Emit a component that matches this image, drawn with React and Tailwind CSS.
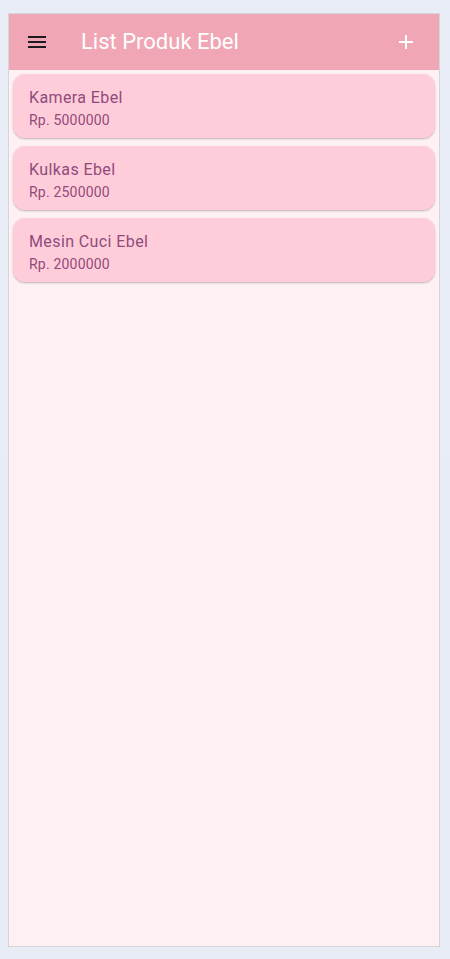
const products = [
  { name: "Kamera Ebel", price: 5000000 },
  { name: "Kulkas Ebel", price: 2500000 },
  { name: "Mesin Cuci Ebel", price: 2000000 },
];

function MenuIcon() {
  return (
    <svg width="24" height="24" viewBox="0 0 24 24" fill="currentColor">
      <path d="M3 18h18v-2H3v2zm0-5h18v-2H3v2zm0-7v2h18V6H3z" />
    </svg>
  );
}

function AddIcon() {
  return (
    <svg width="24" height="24" viewBox="0 0 24 24" fill="currentColor">
      <path d="M19 13h-6v6h-2v-6H5v-2h6V5h2v6h6v2z" />
    </svg>
  );
}

export default function App() {
  return (
    <div className="flex h-[959px] w-[450px] flex-col bg-gradient-to-b from-[#e9edf5] to-[#e7ecf5] pl-2 pr-[10px] pt-[13px] pb-[12px] font-['Roboto',sans-serif]">
      <div className="flex min-h-0 flex-1 flex-col border border-[#d2d5da] bg-[#fff0f4]">
        <header className="flex h-[56px] items-center bg-[#f0a6b4] pr-[9px]">
          <button className="flex h-[56px] w-[56px] items-center justify-center text-[#1d1b20]">
            <MenuIcon />
          </button>
          <h1 className="ml-4 flex-1 text-[22px] leading-7 text-white">List Produk Ebel</h1>
          <button className="flex h-12 w-12 items-center justify-center text-white">
            <AddIcon />
          </button>
        </header>

        <div className="flex flex-col gap-2 px-1 pt-1">
          {products.map((item) => (
            <div
              key={item.name}
              className="rounded-xl bg-[#ffcdd9] px-4 pt-3 pb-2 shadow-[0_1px_2px_rgba(0,0,0,0.25)]"
            >
              <p className="text-base leading-6 tracking-[0.4px] text-[#8f4a7c]">{item.name}</p>
              <p className="text-sm leading-5 tracking-[0.2px] text-[#8f4a7c]">Rp. {item.price}</p>
            </div>
          ))}
        </div>
      </div>
    </div>
  );
}
